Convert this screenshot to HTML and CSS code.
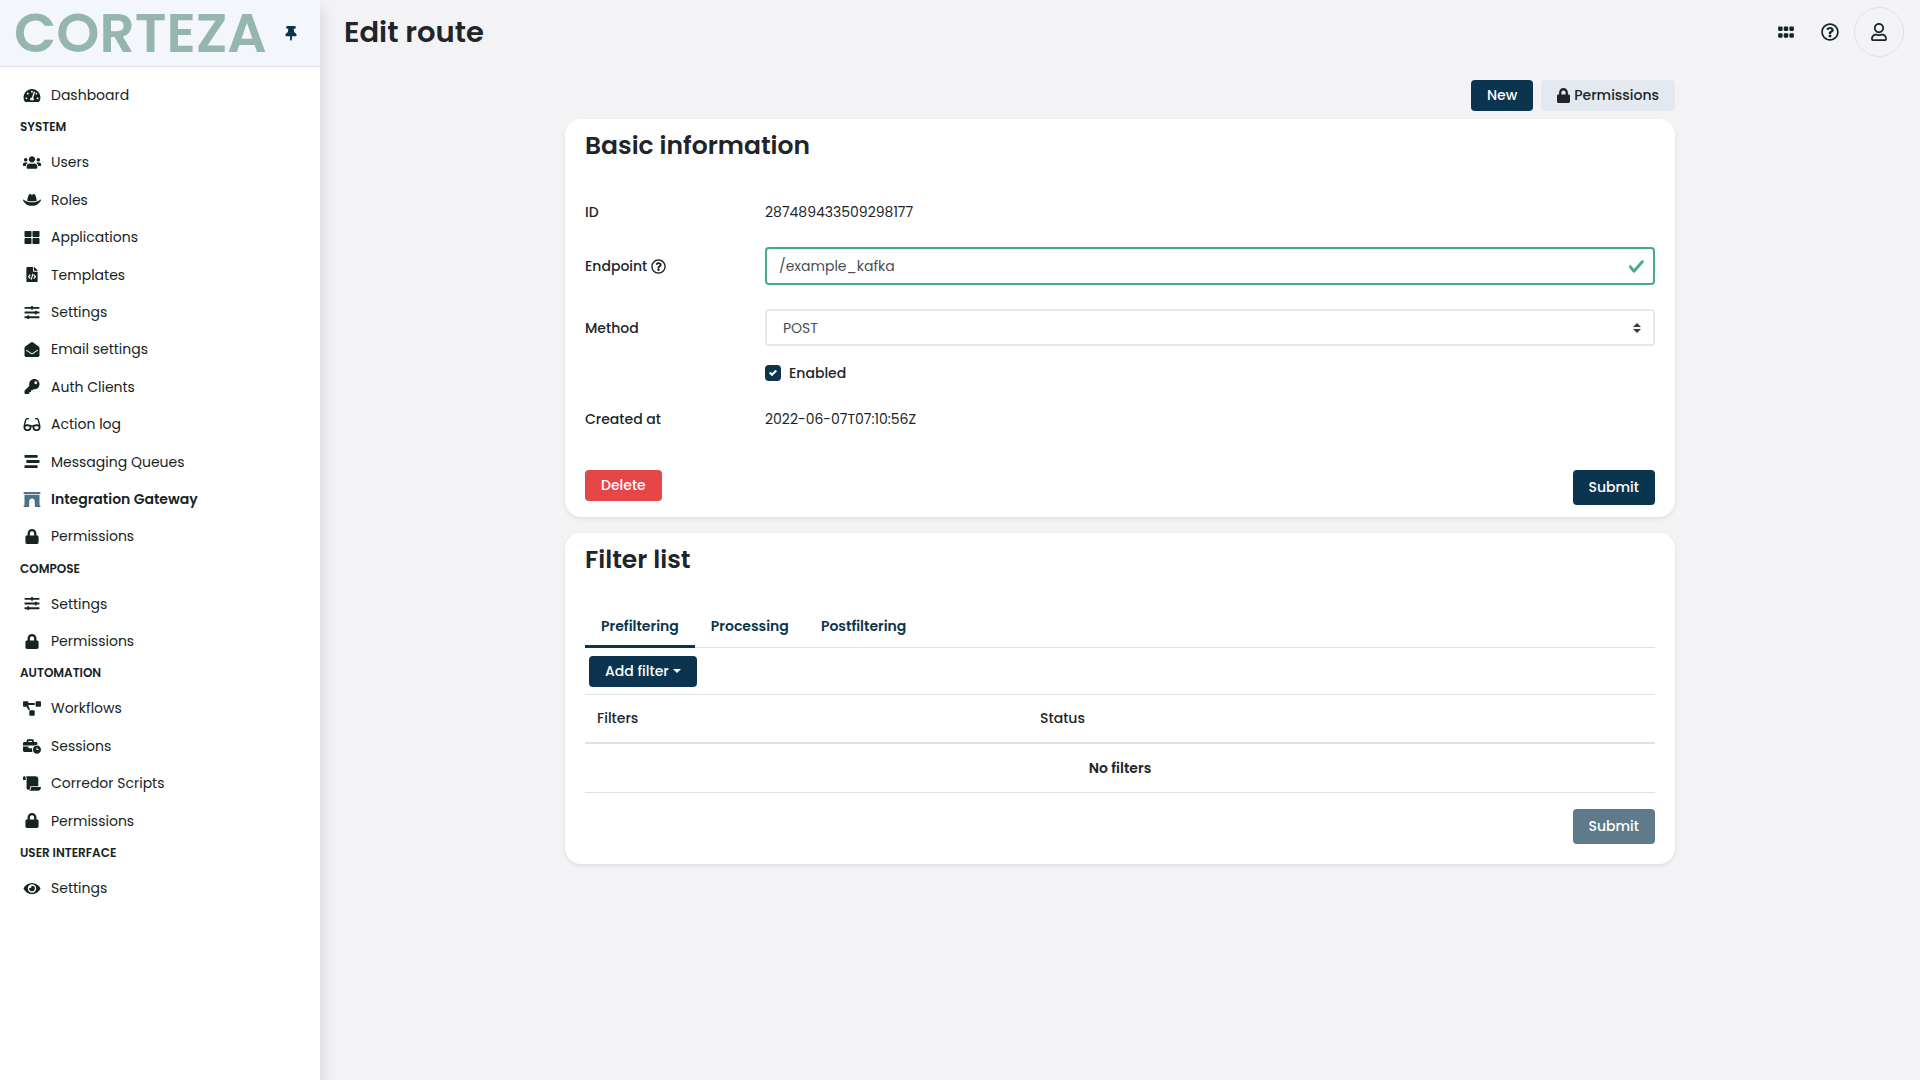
FILE: index.html
```html
<!DOCTYPE html>
<html lang="en">
<head>
<meta charset="utf-8">
<title>Edit route</title>
<meta name="viewport" content="width=device-width, initial-scale=1">
<link rel="stylesheet" href="styles.css">
</head>
<body>
<svg class="sprite" aria-hidden="true">
  <symbol id="tachometer" viewBox="0 0 576 512"><path d="M288 32C128.94 32 0 160.94 0 320c0 52.8 14.25 102.26 39.06 144.8 5.61 9.62 16.3 15.2 27.44 15.2h443c11.14 0 21.83-5.58 27.44-15.2C561.75 422.26 576 372.8 576 320c0-159.06-128.94-288-288-288zm0 64c14.71 0 26.58 10.13 30.32 23.65-1.11 2.26-2.64 4.23-3.45 6.67l-9.22 27.67c-5.13 3.49-10.97 6.01-17.64 6.01-17.67 0-32-14.33-32-32S270.33 96 288 96zM96 384c-17.67 0-32-14.33-32-32s14.33-32 32-32 32 14.33 32 32-14.33 32-32 32zm48-160c-17.67 0-32-14.33-32-32s14.33-32 32-32 32 14.33 32 32-14.33 32-32 32zm246.77-72.41l-61.33 184C343.13 347.33 352 364.54 352 384c0 11.72-3.38 22.55-8.88 32H232.88c-5.5-9.45-8.88-20.28-8.88-32 0-33.94 26.5-61.43 59.9-63.59l61.34-184.01c4.17-12.56 17.73-19.45 30.36-15.17 12.57 4.19 19.35 17.79 15.17 30.36zm14.66 57.2l15.52-46.55c3.47-1.29 7.13-2.23 11.05-2.23 17.67 0 32 14.33 32 32s-14.33 32-32 32c-11.38-.01-20.89-6.28-26.57-15.22zM480 384c-17.67 0-32-14.33-32-32s14.33-32 32-32 32 14.33 32 32-14.33 32-32 32z"/></symbol>
  <symbol id="users" viewBox="0 0 640 512"><path d="M96 224c35.3 0 64-28.7 64-64s-28.7-64-64-64-64 28.7-64 64 28.7 64 64 64zm448 0c35.3 0 64-28.7 64-64s-28.7-64-64-64-64 28.7-64 64 28.7 64 64 64zm32 32h-64c-17.6 0-33.5 7.1-45.1 18.6 40.3 22.1 68.9 62 75.1 109.4h66c17.7 0 32-14.3 32-32v-32c0-35.3-28.7-64-64-64zm-256 0c61.9 0 112-50.1 112-112S381.9 32 320 32 208 82.1 208 144s50.1 112 112 112zm76.8 32h-8.3c-20.8 10-43.9 16-68.5 16s-47.6-6-68.5-16h-8.3C179.6 288 128 339.6 128 403.2V432c0 26.5 21.5 48 48 48h288c26.5 0 48-21.5 48-48v-28.8c0-63.6-51.6-115.2-115.2-115.2zm-223.7-13.4C161.5 263.1 145.6 256 128 256H64c-35.3 0-64 28.7-64 64v32c0 17.7 14.3 32 32 32h65.9c6.3-47.4 34.9-87.3 75.2-109.4z"/></symbol>
  <symbol id="hat" viewBox="0 0 640 512"><path d="M490 296.9C480.51 239.51 450.51 64 392.3 64c-14 0-26.49 5.93-37 14a58.21 58.21 0 0 1-70.58 0c-10.51-8-23-14-37-14-58.2 0-88.2 175.47-97.71 232.88C188.81 309.47 243.73 320 320 320s131.23-10.51 170-23.1zm142.9-37.18a16 16 0 0 0-19.75 1.5c-1 .9-101.27 90.78-293.16 90.78-190.82 0-292.22-89.94-293.24-90.84A16 16 0 0 0 1 278.53C1.73 280.55 78.32 480 320 480s318.27-199.45 319-201.47a16 16 0 0 0-6.09-18.81z"/></symbol>
  <symbol id="th-large" viewBox="0 0 512 512"><path d="M296 32h192c13.255 0 24 10.745 24 24v160c0 13.255-10.745 24-24 24H296c-13.255 0-24-10.745-24-24V56c0-13.255 10.745-24 24-24zm-80 0H24C10.745 32 0 42.745 0 56v160c0 13.255 10.745 24 24 24h192c13.255 0 24-10.745 24-24V56c0-13.255-10.745-24-24-24zM0 296v160c0 13.255 10.745 24 24 24h192c13.255 0 24-10.745 24-24V296c0-13.255-10.745-24-24-24H24c-13.255 0-24 10.745-24 24zm296 184h192c13.255 0 24-10.745 24-24V296c0-13.255-10.745-24-24-24H296c-13.255 0-24 10.745-24 24v160c0 13.255 10.745 24 24 24z"/></symbol>
  <symbol id="file-code" viewBox="0 0 384 512"><path fill-rule="evenodd" d="M24 0h200v136c0 13 11 24 24 24h136v328c0 13-11 24-24 24H24c-13 0-24-11-24-24V24C0 11 11 0 24 0zM256 0h6c6 0 12 3 17 7l98 98c4 5 7 11 7 17v6H256zM120 250L58 316v24l62 66 28-28-47-50 47-50zM264 250l-28 28 47 50-47 50 28 28 62-66v-24zM207 226l-58 198 34 10 58-198z"/></symbol>
  <symbol id="sliders" viewBox="0 0 512 512"><path d="M496 384H160v-16c0-8.8-7.2-16-16-16h-32c-8.8 0-16 7.2-16 16v16H16c-8.8 0-16 7.2-16 16v32c0 8.8 7.2 16 16 16h80v16c0 8.8 7.2 16 16 16h32c8.8 0 16-7.2 16-16v-16h336c8.8 0 16-7.2 16-16v-32c0-8.8-7.2-16-16-16zm0-160h-80v-16c0-8.8-7.2-16-16-16h-32c-8.8 0-16 7.2-16 16v16H16c-8.8 0-16 7.2-16 16v32c0 8.8 7.2 16 16 16h336v16c0 8.8 7.2 16 16 16h32c8.8 0 16-7.2 16-16v-16h80c8.8 0 16-7.2 16-16v-32c0-8.8-7.2-16-16-16zm0-160H288V48c0-8.8-7.2-16-16-16h-32c-8.8 0-16 7.2-16 16v16H16C7.2 64 0 71.2 0 80v32c0 8.8 7.2 16 16 16h208v16c0 8.8 7.2 16 16 16h32c8.8 0 16-7.2 16-16v-16h208c8.8 0 16-7.2 16-16V80c0-8.8-7.2-16-16-16z"/></symbol>
  <symbol id="envelope" viewBox="0 0 512 512"><path d="M512 464c0 26.51-21.49 48-48 48H48c-26.51 0-48-21.49-48-48V200.724a48 48 0 0 1 18.387-37.776c24.913-19.529 45.501-35.365 164.2-121.511C199.412 29.17 232.797-.347 256 .003c23.198-.354 56.596 29.172 73.413 41.433 118.687 86.137 139.303 101.995 164.2 121.512A48 48 0 0 1 512 200.724V464zm-65.666-196.605c-2.563-3.728-7.7-4.595-11.339-1.907-22.845 16.873-55.462 40.705-105.582 77.079-16.825 12.266-50.21 41.781-73.413 41.43-23.211.344-56.559-29.143-73.413-41.43-50.114-36.37-82.734-60.204-105.582-77.079-3.639-2.688-8.776-1.821-11.339 1.907l-9.072 13.196a7.998 7.998 0 0 0 1.839 10.967c22.887 16.899 55.454 40.69 105.303 76.868 20.274 14.781 56.524 47.813 92.264 47.573 35.724.242 71.961-32.771 92.263-47.573 49.85-36.179 82.418-59.97 105.303-76.868a7.998 7.998 0 0 0 1.839-10.967l-9.071-13.196z"/></symbol>
  <symbol id="key" viewBox="0 0 512 512"><path d="M512 176.001C512 273.203 433.202 352 336 352c-11.22 0-22.19-1.062-32.827-3.069l-24.012 27.014A23.999 23.999 0 0 1 261.223 384H224v40c0 13.255-10.745 24-24 24h-40v40c0 13.255-10.745 24-24 24H24c-13.255 0-24-10.745-24-24v-78.059c0-6.365 2.529-12.47 7.029-16.971l161.802-161.802C163.108 213.814 160 195.271 160 176 160 78.798 238.797.001 335.999 0 433.488-.001 512 78.511 512 176.001zM336 128c0 26.51 21.49 48 48 48s48-21.49 48-48-21.49-48-48-48-48 21.49-48 48z"/></symbol>
  <symbol id="glasses" viewBox="0 0 576 512"><path d="M574.1 280.37L528.75 98.66c-5.91-23.7-21.59-44.05-43-55.81-21.44-11.73-46.97-14.11-70.19-6.33l-15.25 5.08c-8.39 2.79-12.92 11.86-10.12 20.24l5.06 15.18c2.79 8.38 11.85 12.91 20.23 10.12l13.18-4.39c10.87-3.62 23-3.57 33.16 1.73 10.29 5.37 17.57 14.56 20.37 25.82l38.46 153.82c-22.19-6.81-49.79-12.46-81.2-12.46-34.77 0-73.98 7.02-114.85 26.74h-73.18c-40.87-19.74-80.08-26.75-114.86-26.75-31.42 0-59.02 5.65-81.21 12.46l38.46-153.83c2.79-11.25 10.09-20.45 20.38-25.81 10.16-5.3 22.28-5.35 33.15-1.73l13.17 4.39c8.38 2.79 17.44-1.74 20.23-10.12l5.06-15.18c2.8-8.38-1.73-17.45-10.12-20.24l-15.25-5.08c-23.22-7.78-48.75-5.41-70.19 6.33-21.41 11.77-37.09 32.11-43 55.8L1.9 280.37A64.218 64.218 0 0 0 0 295.86v70.25C0 429.01 51.58 480 115.2 480h37.12c60.28 0 110.37-45.94 114.88-105.37l2.93-38.63h35.75l2.93 38.63C313.31 434.06 363.4 480 423.68 480h37.12c63.62 0 115.2-50.99 115.2-113.88v-70.25c0-5.23-.64-10.43-1.9-15.5zm-370.72 89.42c-1.97 25.91-24.4 46.21-51.06 46.21H115.2C86.97 416 64 393.62 64 366.11v-37.54c18.12-6.49 43.42-12.92 72.58-12.92 23.86 0 47.26 4.33 69.93 12.92l-3.13 41.22zM512 366.12c0 27.51-22.97 49.88-51.2 49.88h-37.12c-26.67 0-49.1-20.3-51.06-46.21l-3.13-41.22c22.67-8.59 46.08-12.92 69.95-12.92 29.12 0 54.43 6.44 72.55 12.93v37.54z"/></symbol>
  <symbol id="stream" viewBox="0 0 512 512"><path d="M16 128h416c8.84 0 16-7.16 16-16V48c0-8.84-7.16-16-16-16H16C7.16 32 0 39.16 0 48v64c0 8.84 7.16 16 16 16zm480 80H80c-8.84 0-16 7.16-16 16v64c0 8.84 7.16 16 16 16h416c8.84 0 16-7.16 16-16v-64c0-8.84-7.16-16-16-16zm-64 176H16c-8.84 0-16 7.16-16 16v64c0 8.84 7.16 16 16 16h416c8.84 0 16-7.16 16-16v-64c0-8.84-7.16-16-16-16z"/></symbol>
  <symbol id="archway" viewBox="0 0 576 512"><path d="M560 448h-16V96H32v352H16.02c-8.84 0-16 7.16-16 16v32c0 8.84 7.16 16 16 16H176c8.84 0 16-7.16 16-16V320c0-53.02 42.98-96 96-96s96 42.98 96 96l.02 160v16c0 8.84 7.16 16 16 16H560c8.84 0 16-7.16 16-16v-32c0-8.84-7.16-16-16-16zm0-448H16C7.16 0 0 7.16 0 16v32c0 8.84 7.16 16 16 16h544c8.84 0 16-7.16 16-16V16c0-8.84-7.16-16-16-16z"/></symbol>
  <symbol id="lock" viewBox="0 0 448 512"><path d="M400 224h-24v-72C376 68.2 307.8 0 224 0S72 68.2 72 152v72H48c-26.5 0-48 21.5-48 48v192c0 26.5 21.5 48 48 48h352c26.5 0 48-21.5 48-48V272c0-26.5-21.5-48-48-48zm-104 0H152v-72c0-39.7 32.3-72 72-72s72 32.3 72 72v72z"/></symbol>
  <symbol id="diagram" viewBox="0 0 640 512"><path d="M384 320H256c-17.67 0-32 14.33-32 32v128c0 17.67 14.33 32 32 32h128c17.67 0 32-14.33 32-32V352c0-17.67-14.33-32-32-32zM192 32c0-17.67-14.33-32-32-32H32C14.33 0 0 14.33 0 32v128c0 17.67 14.33 32 32 32h95.72l73.16 128.04C211.98 300.98 232.4 288 256 288h.28L192 175.51V128h224V64H192V32zM608 0H480c-17.67 0-32 14.33-32 32v128c0 17.67 14.33 32 32 32h128c17.67 0 32-14.33 32-32V32c0-17.67-14.33-32-32-32z"/></symbol>
  <symbol id="business-time" viewBox="0 0 640 512"><path d="M496 224c-79.59 0-144 64.41-144 144s64.41 144 144 144 144-64.41 144-144-64.41-144-144-144zm64 150.29c0 5.34-4.37 9.71-9.71 9.71h-60.57c-5.34 0-9.71-4.37-9.71-9.71v-76.57c0-5.34 4.37-9.71 9.71-9.71h12.57c5.34 0 9.71 4.37 9.71 9.71V352h38.29c5.34 0 9.71 4.37 9.71 9.71v12.58zM496 192c5.4 0 10.72.33 16 .81V144c0-25.6-22.4-48-48-48h-80V48c0-25.6-22.4-48-48-48H176c-25.6 0-48 22.4-48 48v48H48c-25.6 0-48 22.4-48 48v80h395.12c28.6-20.09 63.35-32 100.88-32zM320 96H192V64h128v32zm6.82 224H208c-8.84 0-16-7.16-16-16v-48H0v144c0 25.6 22.4 48 48 48h291.43C327.1 427.12 320 398.4 320 368c0-16.66 2.48-32.72 6.82-48z"/></symbol>
  <symbol id="scroll" viewBox="0 0 640 512"><path d="M48 0C21.53 0 0 21.53 0 48v64c0 8.84 7.16 16 16 16h80V48C96 21.53 74.47 0 48 0zm208 412.57V352h288V96c0-52.94-43.06-96-96-96H111.59C121.74 13.41 128 29.92 128 48v368c0 38.87 34.65 69.65 74.75 63.12C234.22 474 256 444.46 256 412.57zM288 384v32c0 52.93-43.06 96-96 96h336c61.86 0 112-50.14 112-112 0-8.84-7.16-16-16-16H288z"/></symbol>
  <symbol id="eye" viewBox="0 0 576 512"><path d="M572.52 241.4C518.29 135.59 410.93 64 288 64S57.68 135.64 3.48 241.41a32.35 32.35 0 0 0 0 29.19C57.71 376.41 165.07 448 288 448s230.32-71.64 284.52-177.41a32.35 32.35 0 0 0 0-29.19zM288 400a144 144 0 1 1 144-144 143.93 143.93 0 0 1-144 144zm0-240a95.31 95.31 0 0 0-25.31 3.79 47.85 47.85 0 0 1-66.9 66.9A95.78 95.78 0 1 0 288 160z"/></symbol>
  <symbol id="thumbtack" viewBox="0 0 384 512"><path d="M298.028 214.267L285.793 96H328c13.255 0 24-10.745 24-24V24c0-13.255-10.745-24-24-24H56C42.745 0 32 10.745 32 24v48c0 13.255 10.745 24 24 24h42.207L85.972 214.267C37.465 236.82 0 277.261 0 328c0 13.255 10.745 24 24 24h136v104.007c0 1.242.289 2.467.845 3.578l24 48c2.941 5.882 11.364 5.893 14.311 0l24-48a8.008 8.008 0 0 0 .845-3.578V352h136c13.255 0 24-10.745 24-24-.001-51.183-37.983-91.42-85.973-113.733z"/></symbol>
  <symbol id="grip" viewBox="0 0 448 512"><path d="M96 288H32c-17.67 0-32 14.33-32 32v64c0 17.67 14.33 32 32 32h64c17.67 0 32-14.33 32-32v-64c0-17.67-14.33-32-32-32zm160 0h-64c-17.67 0-32 14.33-32 32v64c0 17.67 14.33 32 32 32h64c17.67 0 32-14.33 32-32v-64c0-17.67-14.33-32-32-32zm160 0h-64c-17.67 0-32 14.33-32 32v64c0 17.67 14.33 32 32 32h64c17.67 0 32-14.33 32-32v-64c0-17.67-14.33-32-32-32zM96 96H32c-17.67 0-32 14.33-32 32v64c0 17.67 14.33 32 32 32h64c17.67 0 32-14.33 32-32v-64c0-17.67-14.33-32-32-32zm160 0h-64c-17.67 0-32 14.33-32 32v64c0 17.67 14.33 32 32 32h64c17.67 0 32-14.33 32-32v-64c0-17.67-14.33-32-32-32zm160 0h-64c-17.67 0-32 14.33-32 32v64c0 17.67 14.33 32 32 32h64c17.67 0 32-14.33 32-32v-64c0-17.67-14.33-32-32-32z"/></symbol>
  <symbol id="question" viewBox="0 0 512 512"><path d="M256 8C119.043 8 8 119.083 8 256c0 136.997 111.043 248 248 248s248-111.003 248-248C504 119.083 392.957 8 256 8zm0 448c-110.532 0-200-89.431-200-200 0-110.495 89.472-200 200-200 110.491 0 200 89.471 200 200 0 110.53-89.431 200-200 200zm107.244-255.2c0 67.052-72.421 68.084-72.421 92.863V300c0 6.627-5.373 12-12 12h-45.647c-6.627 0-12-5.373-12-12v-8.659c0-35.745 27.1-50.034 47.579-61.516 17.561-9.845 28.324-16.541 28.324-29.579 0-17.246-21.999-28.693-39.784-28.693-23.189 0-33.894 10.977-48.942 29.969-4.057 5.12-11.46 6.071-16.666 2.124l-27.824-21.098c-5.107-3.872-6.251-11.066-2.644-16.363C184.846 131.491 214.94 112 261.794 112c49.071 0 101.45 38.304 101.45 88.8zM298 368c0 23.159-18.841 42-42 42s-42-18.841-42-42 18.841-42 42-42 42 18.841 42 42z"/></symbol>
  <symbol id="user" viewBox="0 0 448 512"><path d="M313.6 304c-28.7 0-42.5 16-89.6 16-47.1 0-60.8-16-89.6-16C60.2 304 0 364.2 0 438.4V464c0 26.5 21.5 48 48 48h352c26.5 0 48-21.5 48-48v-25.6c0-74.2-60.2-134.4-134.4-134.4zM400 464H48v-25.6c0-47.6 38.8-86.4 86.4-86.4 14.6 0 38.3 16 89.6 16 51.7 0 74.9-16 89.6-16 47.6 0 86.4 38.8 86.4 86.4V464zM224 288c79.5 0 144-64.5 144-144S303.5 0 224 0 80 64.5 80 144s64.5 144 144 144zm0-240c52.9 0 96 43.1 96 96s-43.1 96-96 96-96-43.1-96-96 43.1-96 96-96z"/></symbol>
</svg>

<div class="app">
  <aside class="sidebar">
    <div class="sidebar-header">
      <a class="logo" href="#">CORTEZA</a>
      <button class="pin" type="button" aria-label="Unpin sidebar"><svg><use href="#thumbtack"/></svg></button>
    </div>
    <nav class="nav">
      <ul class="nav-list">
        <li><a class="nav-link" href="#"><svg><use href="#tachometer"/></svg>Dashboard</a></li>
      </ul>
      <h2 class="nav-title">SYSTEM</h2>
      <ul class="nav-list">
        <li><a class="nav-link" href="#"><svg><use href="#users"/></svg>Users</a></li>
        <li><a class="nav-link" href="#"><svg><use href="#hat"/></svg>Roles</a></li>
        <li><a class="nav-link" href="#"><svg><use href="#th-large"/></svg>Applications</a></li>
        <li><a class="nav-link" href="#"><svg><use href="#file-code"/></svg>Templates</a></li>
        <li><a class="nav-link" href="#"><svg><use href="#sliders"/></svg>Settings</a></li>
        <li><a class="nav-link" href="#"><svg><use href="#envelope"/></svg>Email settings</a></li>
        <li><a class="nav-link" href="#"><svg><use href="#key"/></svg>Auth Clients</a></li>
        <li><a class="nav-link" href="#"><svg><use href="#glasses"/></svg>Action log</a></li>
        <li><a class="nav-link" href="#"><svg><use href="#stream"/></svg>Messaging Queues</a></li>
        <li><a class="nav-link active" href="#" aria-current="page"><svg><use href="#archway"/></svg>Integration Gateway</a></li>
        <li><a class="nav-link" href="#"><svg><use href="#lock"/></svg>Permissions</a></li>
      </ul>
      <h2 class="nav-title">COMPOSE</h2>
      <ul class="nav-list">
        <li><a class="nav-link" href="#"><svg><use href="#sliders"/></svg>Settings</a></li>
        <li><a class="nav-link" href="#"><svg><use href="#lock"/></svg>Permissions</a></li>
      </ul>
      <h2 class="nav-title">AUTOMATION</h2>
      <ul class="nav-list">
        <li><a class="nav-link" href="#"><svg><use href="#diagram"/></svg>Workflows</a></li>
        <li><a class="nav-link" href="#"><svg><use href="#business-time"/></svg>Sessions</a></li>
        <li><a class="nav-link" href="#"><svg><use href="#scroll"/></svg>Corredor Scripts</a></li>
        <li><a class="nav-link" href="#"><svg><use href="#lock"/></svg>Permissions</a></li>
      </ul>
      <h2 class="nav-title">USER INTERFACE</h2>
      <ul class="nav-list">
        <li><a class="nav-link" href="#"><svg><use href="#eye"/></svg>Settings</a></li>
      </ul>
    </nav>
  </aside>

  <div class="page">
    <header class="topbar">
      <h1 class="page-title">Edit route</h1>
      <div class="topbar-tools">
        <button class="tool" type="button" aria-label="Applications"><svg><use href="#grip"/></svg></button>
        <button class="tool" type="button" aria-label="Help"><svg><use href="#question"/></svg></button>
        <button class="tool avatar" type="button" aria-label="Profile"><svg><use href="#user"/></svg></button>
      </div>
    </header>

    <main class="container">
      <div class="actions">
        <button class="btn btn-primary" type="button">New</button>
        <button class="btn btn-light" type="button"><svg><use href="#lock"/></svg>Permissions</button>
      </div>

      <form class="card">
        <h2 class="card-title">Basic information</h2>
        <div class="fields">
          <div class="field">
            <span class="label">ID</span>
            <span>287489433509298177</span>
          </div>
          <div class="field">
            <label class="label" for="endpoint">Endpoint <svg><use href="#question"/></svg></label>
            <input class="control is-valid" id="endpoint" type="text" value="/example_kafka">
          </div>
          <div class="field">
            <label class="label" for="method">Method</label>
            <select class="control select" id="method"><option>POST</option></select>
          </div>
          <div class="field field-check">
            <label class="check"><input type="checkbox" checked>Enabled</label>
          </div>
          <div class="field">
            <span class="label">Created at</span>
            <span>2022-06-07T07:10:56Z</span>
          </div>
        </div>
        <div class="card-footer">
          <button class="btn btn-danger" type="button">Delete</button>
          <button class="btn btn-primary btn-submit" type="submit">Submit</button>
        </div>
      </form>

      <section class="card card-filters">
        <h2 class="card-title">Filter list</h2>
        <div class="tabs" role="tablist">
          <button class="tab active" type="button" role="tab" aria-selected="true">Prefiltering</button>
          <button class="tab" type="button" role="tab" aria-selected="false">Processing</button>
          <button class="tab" type="button" role="tab" aria-selected="false">Postfiltering</button>
        </div>
        <div class="toolbar">
          <button class="btn btn-primary dropdown" type="button">Add filter</button>
        </div>
        <table class="table">
          <thead>
            <tr><th>Filters</th><th>Status</th></tr>
          </thead>
          <tbody>
            <tr><td class="empty" colspan="2">No filters</td></tr>
          </tbody>
        </table>
        <div class="card-footer">
          <button class="btn btn-primary btn-submit" type="submit" disabled>Submit</button>
        </div>
      </section>
    </main>
  </div>
</div>
</body>
</html>
```
FILE: styles.css
```css
* { box-sizing: border-box; }

body {
  margin: 0;
  background: #f3f3f5;
  color: #212529;
  font-family: Poppins, Inter, sans-serif;
  font-size: 14px;
  line-height: 22px;
}

h1, h2, ul { margin: 0; padding: 0; }
ul { list-style: none; }
a { color: inherit; text-decoration: none; }
button, input, select { font: inherit; color: inherit; }
button { cursor: pointer; }
svg { fill: currentColor; flex: none; }

.sprite { display: none; }

.app {
  display: flex;
  min-height: 100vh;
}

/* Sidebar */
.sidebar {
  flex: none;
  width: 320px;
  background: #fff;
  color: #162425;
  box-shadow: 0 8px 16px rgba(0, 0, 0, .15);
}

.sidebar-header {
  display: flex;
  align-items: center;
  justify-content: space-between;
  height: 67px;
  padding: 0 23px 0 14px;
  background: #f3f6fa;
  border-bottom: 1px solid #dee2e6;
}

.logo {
  color: #96b5af;
  font-size: 55px;
  font-weight: 600;
  line-height: 66px;
}

.pin {
  display: flex;
  padding: 0;
  border: 0;
  background: none;
  color: #0b344e;
}

.pin svg { width: 12px; height: 15px; }

.nav { padding-top: 10px; }

.nav-title {
  padding: 4px 20px 8px;
  font-size: 12px;
  font-weight: 600;
  line-height: 18px;
}

.nav-link {
  display: flex;
  align-items: center;
  gap: 10px;
  padding: 7px 23px 8px;
  line-height: 1.6;
}

.nav-link svg { width: 18px; height: 15px; }
.nav-link.active { font-weight: 600; }
.nav-link.active svg { fill: #4b7385; }

/* Page */
.page {
  flex: 1;
  min-width: 0;
}

.topbar {
  display: flex;
  align-items: center;
  justify-content: space-between;
  height: 64px;
  padding: 0 16px 0 24px;
}

.page-title {
  font-size: 29px;
  font-weight: 600;
  line-height: 36px;
}

.topbar-tools {
  display: flex;
  align-items: center;
  color: #162425;
}

.tool {
  display: flex;
  align-items: center;
  justify-content: center;
  width: 44px;
  height: 44px;
  padding: 0;
  border: 0;
  background: none;
}

.tool svg { width: 18px; height: 18px; }

.avatar {
  width: 50px;
  height: 50px;
  margin-left: 2px;
  border: 1px solid #dee2e6;
  border-radius: 50%;
}

.container {
  max-width: 1110px;
  margin: 0 auto;
  padding: 16px 0;
}

.actions {
  display: flex;
  justify-content: flex-end;
  gap: 8px;
  margin-bottom: 8px;
}

.btn {
  display: inline-flex;
  align-items: center;
  justify-content: center;
  gap: 4px;
  height: 31px;
  padding: 0 16px 1px;
  border: 0;
  border-radius: 4px;
  font-weight: 500;
}

.btn svg { width: 13px; height: 15px; }
.btn-primary { background: #0b344e; color: #fff; }
.btn-light { background: #e4e9ef; color: #212529; }
.btn-danger { background: #e54646; color: #fff; }
.btn-submit { height: 35px; margin-left: auto; }
.btn:disabled { opacity: .65; }

.dropdown::after {
  content: "";
  border: 4px solid transparent;
  border-top-color: currentColor;
  border-bottom: 0;
}

/* Cards */
.card {
  margin-bottom: 16px;
  padding: 8px 20px 12px;
  background: #fff;
  border-radius: 16px;
  box-shadow: 0 2px 4px rgba(0, 0, 0, .08);
}

.card-filters { padding-bottom: 20px; }

.card-title {
  font-size: 25px;
  font-weight: 600;
  line-height: 38px;
}

.card-footer {
  display: flex;
  align-items: flex-start;
}

.fields {
  display: flex;
  flex-direction: column;
  gap: 24px;
  padding: 36px 0 40px;
}

.field {
  display: grid;
  grid-template-columns: 180px 1fr;
  align-items: center;
}

.field-check { margin-top: -8px; }

.label {
  display: flex;
  align-items: center;
  gap: 4px;
  font-weight: 500;
}

.label svg { width: 15px; height: 15px; }

.control {
  width: 100%;
  height: 38px;
  padding: 0 12px;
  border: 2px solid #e4e9ef;
  border-radius: 4px;
  background: #fff no-repeat;
  color: #495057;
}

.is-valid {
  border-color: #43aa8b;
  background-image: url("data:image/svg+xml,%3Csvg xmlns='http://www.w3.org/2000/svg' viewBox='0 0 8 8'%3E%3Cpath fill='%2343aa8b' d='M2.3 6.73L.6 4.53c-.4-1.04.46-1.4 1.1-.8l1.1 1.4 3.4-3.8c.6-.63 1.6-.27 1.2.7l-4 4.6c-.43.5-.8.4-1.1.1z'/%3E%3C/svg%3E");
  background-position: right 8px center;
  background-size: 17px 17px;
}

.select {
  appearance: none;
  height: 37px;
  padding: 0 16px;
  background-image: url("data:image/svg+xml,%3Csvg xmlns='http://www.w3.org/2000/svg' viewBox='0 0 4 5'%3E%3Cpath fill='%23343a40' d='M2 0L0 2h4zm0 5L0 3h4z'/%3E%3C/svg%3E");
  background-position: right 12px center;
  background-size: 8px 10px;
}

.check {
  grid-column: 2;
  display: flex;
  align-items: center;
  gap: 8px;
  justify-self: start;
  font-weight: 500;
}

.check input {
  appearance: none;
  width: 16px;
  height: 16px;
  margin: 0;
  border-radius: 4px;
  background: #0b344e url("data:image/svg+xml,%3Csvg xmlns='http://www.w3.org/2000/svg' viewBox='0 0 8 8'%3E%3Cpath fill='white' d='M6.564.75l-3.59 3.612-1.538-1.55L0 4.26l2.974 2.99L8 2.193z'/%3E%3C/svg%3E") no-repeat center / 8px 8px;
}

/* Filter list */
.tabs {
  display: flex;
  margin-top: 26px;
  border-bottom: 1px solid #dee2e6;
}

.tab {
  height: 43px;
  margin-bottom: -1px;
  padding: 2px 16px 0;
  border: 0;
  border-bottom: 3px solid transparent;
  background: none;
  color: #0b344e;
  font-weight: 600;
}

.tab.active { border-bottom-color: #0b344e; }

.toolbar {
  display: flex;
  padding: 8px 4px 7px;
}

.table {
  width: 100%;
  margin-bottom: 16px;
  border-collapse: collapse;
  table-layout: fixed;
}

.table th,
.table td {
  height: 48px;
  padding: 0 12px;
  border-top: 1px solid #dee2e6;
  text-align: left;
  font-weight: 500;
}

.table th:first-child { width: 443px; }
.table thead th { border-bottom: 2px solid #dee2e6; }
.table tbody { border-bottom: 1px solid #dee2e6; }

.table .empty {
  height: 50px;
  text-align: center;
  font-weight: 600;
}
```
